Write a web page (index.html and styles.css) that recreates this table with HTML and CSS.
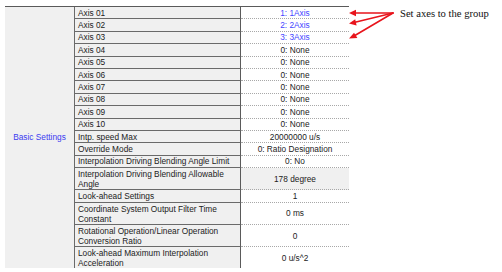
FILE: index.html
```html
<!DOCTYPE html>
<html>
<head>
<meta charset="utf-8">
<link rel="stylesheet" href="styles.css">
</head>
<body>
<div class="page">
  <div class="sheet">
    <div class="cat"><span class="cat-label">Basic Settings</span></div>
    <div class="rows">
      <div class="row"><div class="label">Axis 01</div><div class="value blue">1: 1Axis</div></div>
      <div class="row"><div class="label">Axis 02</div><div class="value blue">2: 2Axis</div></div>
      <div class="row"><div class="label">Axis 03</div><div class="value blue">3: 3Axis</div></div>
      <div class="row"><div class="label">Axis 04</div><div class="value">0: None</div></div>
      <div class="row"><div class="label">Axis 05</div><div class="value">0: None</div></div>
      <div class="row"><div class="label">Axis 06</div><div class="value">0: None</div></div>
      <div class="row"><div class="label">Axis 07</div><div class="value">0: None</div></div>
      <div class="row"><div class="label">Axis 08</div><div class="value">0: None</div></div>
      <div class="row"><div class="label">Axis 09</div><div class="value">0: None</div></div>
      <div class="row"><div class="label">Axis 10</div><div class="value">0: None</div></div>
      <div class="row"><div class="label">Intp. speed Max</div><div class="value">20000000 u/s</div></div>
      <div class="row"><div class="label">Override Mode</div><div class="value">0: Ratio Designation</div></div>
      <div class="row"><div class="label">Interpolation Driving Blending Angle Limit</div><div class="value">0: No</div></div>
      <div class="row tall"><div class="label">Interpolation Driving Blending Allowable Angle</div><div class="value selected">178 degree</div></div>
      <div class="row"><div class="label">Look-ahead Settings</div><div class="value">1</div></div>
      <div class="row tall"><div class="label">Coordinate System Output Filter Time Constant</div><div class="value">0 ms</div></div>
      <div class="row tall"><div class="label">Rotational Operation/Linear Operation Conversion Ratio</div><div class="value">0</div></div>
      <div class="row tall"><div class="label">Look-ahead Maximum Interpolation Acceleration</div><div class="value">0 u/s^2</div></div>
    </div>
  </div>
  <div class="note">
    <svg class="arrows" width="52" height="44" viewBox="0 0 52 44">
      <g stroke="#e8141c" stroke-width="1.6" fill="none" stroke-linecap="round">
        <line x1="44" y1="13" x2="5" y2="13"/>
        <line x1="44" y1="13" x2="5" y2="22.5"/>
        <line x1="44" y1="13" x2="5" y2="36"/>
      </g>
      <g fill="#e8141c">
        <polygon points="0,13 7,9.8 7,16.2"/>
        <polygon points="0,23.6 6.2,19.2 7.6,25.4"/>
        <polygon points="0,38.6 5,32.8 8.4,38"/>
      </g>
    </svg>
    <div class="note-text">Set axes to the group</div>
  </div>
</div>
</body>
</html>
```
FILE: styles.css
```css
html, body {
  margin: 0;
  padding: 0;
  background: #ffffff;
}

.page {
  display: flex;
  align-items: flex-start;
  padding: 6px 0 0 5px;
}

.sheet {
  display: flex;
  width: 344px;
  height: 261px;
  overflow: hidden;
  border-top: 1px solid #5a5a5a;
  font-family: "Liberation Sans", Arial, sans-serif;
  font-size: 8.3px;
  color: #222222;
}

.cat {
  width: 69px;
  flex: none;
  background: #f0f0f0;
  text-align: center;
  padding-top: 125px;
  box-sizing: border-box;
}

.cat-label {
  color: #3b3bf0;
  line-height: 10px;
}

.rows {
  display: flex;
  flex-direction: column;
  width: 275px;
  flex: none;
}

.row {
  display: flex;
  height: 12.4px;
  flex: none;
}

.row.tall {
  height: 22.3px;
}

.label {
  width: 167px;
  box-sizing: border-box;
  background: #f0f0f0;
  border-left: 1px solid #6a6a6a;
  border-right: 1px solid #5a5a5a;
  border-bottom: 1px solid #6a6a6a;
  padding: 0 4px 0 3px;
  line-height: 10px;
  display: flex;
  align-items: center;
  overflow: hidden;
}

.row.tall .label {
  align-items: flex-start;
  padding-top: 1px;
}

.value {
  width: 108px;
  box-sizing: border-box;
  background: #ffffff;
  border-bottom: 1px dotted #a8a8a8;
  text-align: center;
  line-height: 10px;
  display: flex;
  align-items: center;
  justify-content: center;
}

.value.blue {
  color: #4444ff;
}

.value.selected {
  background: #f0f0f0;
}

.note {
  display: flex;
  align-items: flex-start;
  margin-top: -6px;
}

.arrows {
  display: block;
}

.note-text {
  font-family: "Liberation Serif", "Times New Roman", serif;
  font-size: 10.6px;
  color: #111111;
  padding-top: 8px;
  margin-left: -1px;
  white-space: nowrap;
}
```
